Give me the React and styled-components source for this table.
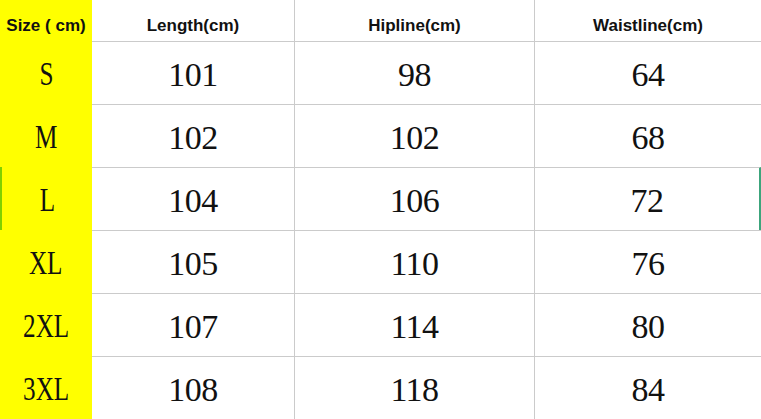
import styled, { createGlobalStyle } from 'styled-components';

const rows = [
  { size: 'S', length: 101, hip: 98, waist: 64 },
  { size: 'M', length: 102, hip: 102, waist: 68 },
  { size: 'L', length: 104, hip: 106, waist: 72, selected: true },
  { size: 'XL', length: 105, hip: 110, waist: 76 },
  { size: '2XL', length: 107, hip: 114, waist: 80 },
  { size: '3XL', length: 108, hip: 118, waist: 84 },
];

const SizeChart = () => {
  return (
    <>
      <GlobalStyle />
      <Table>
        <Row $header>
          <Cell $size $header>
            <HeadText>Size ( cm)</HeadText>
          </Cell>
          <Cell $header $divider>
            <HeadText>Length(cm)</HeadText>
          </Cell>
          <Cell $header $divider>
            <HeadText>Hipline(cm)</HeadText>
          </Cell>
          <Cell $header>
            <HeadText>Waistline(cm)</HeadText>
          </Cell>
        </Row>
        {rows.map((r) => (
          <Row key={r.size}>
            <Cell $size $selectedLeft={r.selected}>
              <SizeText>{r.size}</SizeText>
            </Cell>
            <Cell $line $divider>
              <Value>{r.length}</Value>
            </Cell>
            <Cell $line $divider>
              <Value>{r.hip}</Value>
            </Cell>
            <Cell $line $selectedRight={r.selected}>
              <Value>{r.waist}</Value>
            </Cell>
          </Row>
        ))}
      </Table>
    </>
  );
};

const GlobalStyle = createGlobalStyle`
  html, body {
    margin: 0;
    padding: 0;
    background: #fff;
  }
`;

const Table = styled.div`
  width: 761px;
  height: 419px;
  overflow: hidden;
  display: flex;
  flex-direction: column;
  background: #fff;
`;

const Row = styled.div`
  display: grid;
  grid-template-columns: 92px 203px 240px 1fr;
  height: ${(p) => (p.$header ? '41px' : '63px')};
`;

const Cell = styled.div`
  box-sizing: border-box;
  display: flex;
  justify-content: center;
  align-items: ${(p) => (p.$header ? 'flex-end' : 'center')};
  padding-bottom: ${(p) => (p.$header ? '5px' : '0')};
  padding-top: ${(p) => (p.$header ? '0' : '3px')};
  background: ${(p) => (p.$size ? '#ffff00' : '#fff')};
  border-top: ${(p) => (p.$line ? '1px solid #cbcbcb' : 'none')};
  border-right: ${(p) =>
    p.$divider ? '1px solid #cbcbcb' : p.$selectedRight ? '2px solid #3ca57c' : 'none'};
  border-left: ${(p) => (p.$selectedLeft ? '2px solid #80d000' : 'none')};
`;

const HeadText = styled.span`
  font-family: 'Liberation Sans', Arial, sans-serif;
  font-weight: 700;
  font-size: 17px;
  color: #111;
  white-space: nowrap;
`;

const Value = styled.span`
  font-family: 'Liberation Serif', 'Times New Roman', serif;
  font-size: 34px;
  letter-spacing: -0.5px;
  color: #111;
`;

const SizeText = styled(Value)`
  display: inline-block;
  transform: scaleX(0.74);
  letter-spacing: 0;
`;

export default SizeChart;
